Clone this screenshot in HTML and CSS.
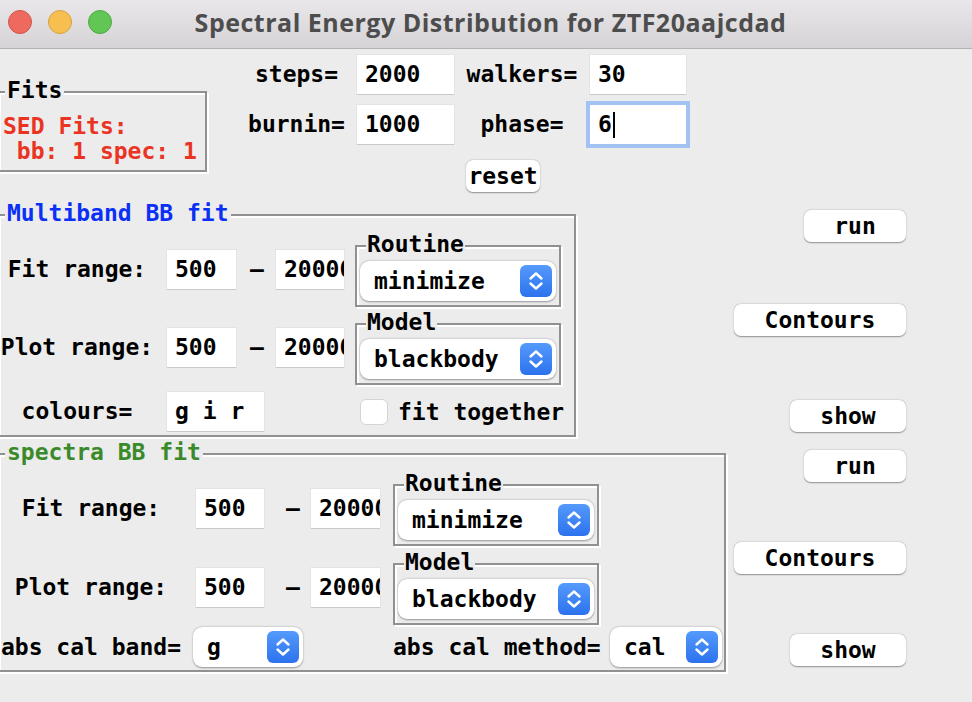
FILE: index.html
```html
<!DOCTYPE html>
<html>
<head>
<meta charset="utf-8">
<title>Spectral Energy Distribution for ZTF20aajcdad</title>
<link rel="stylesheet" href="styles.css">
</head>
<body>
<header class="titlebar">
  <div class="lights">
    <span class="light red"></span>
    <span class="light yellow"></span>
    <span class="light green"></span>
  </div>
  <div class="title">Spectral Energy Distribution for ZTF20aajcdad</div>
</header>

<main class="content">
  <section class="top">
    <div class="groove fits-frame">
      <span class="frame-label">Fits</span>
      <div class="fits-text">SED Fits:
 bb: 1 spec: 1</div>
    </div>
    <div class="params">
      <span class="plabel">steps=</span>
      <div class="entry">2000</div>
      <span class="plabel">walkers=</span>
      <div class="entry">30</div>
      <span class="plabel">burnin=</span>
      <div class="entry">1000</div>
      <span class="plabel">phase=</span>
      <div class="entry focused"><span class="caret">6</span></div>
      <button class="btn reset">reset</button>
    </div>
  </section>

  <section class="fit-row mb-row">
    <div class="groove fitframe mb">
      <span class="frame-label blue">Multiband BB fit</span>
      <div class="mb-grid">
        <span class="rlabel r1">Fit range:</span>
        <div class="entry e-lo r1">500</div>
        <span class="dash r1">–</span>
        <div class="entry e-hi r1">20000</div>
        <div class="groove subframe s1">
          <span class="frame-label sub">Routine</span>
          <div class="menubtn"><span>minimize</span><span class="arrow"><svg viewBox="0 0 32 32" width="32" height="32"><path d="M10.5 13.5 L16 8.5 L21.5 13.5 M10.5 18.5 L16 23.5 L21.5 18.5" fill="none" stroke="#fff" stroke-width="2.4" stroke-linecap="round" stroke-linejoin="round"/></svg></span></div>
        </div>

        <span class="rlabel r2">Plot range:</span>
        <div class="entry e-lo r2">500</div>
        <span class="dash r2">–</span>
        <div class="entry e-hi r2">20000</div>
        <div class="groove subframe s2">
          <span class="frame-label sub">Model</span>
          <div class="menubtn"><span>blackbody</span><span class="arrow"><svg viewBox="0 0 32 32" width="32" height="32"><path d="M10.5 13.5 L16 8.5 L21.5 13.5 M10.5 18.5 L16 23.5 L21.5 18.5" fill="none" stroke="#fff" stroke-width="2.4" stroke-linecap="round" stroke-linejoin="round"/></svg></span></div>
        </div>

        <span class="rlabel r3">colours=</span>
        <div class="entry e-col r3">g i r</div>
        <label class="check r3"><span class="box"></span><span>fit together</span></label>
      </div>
    </div>
    <div class="actions mb-actions">
      <button class="btn run">run</button>
      <button class="btn contours">Contours</button>
      <button class="btn show">show</button>
    </div>
  </section>

  <section class="fit-row sp-row">
    <div class="groove fitframe sp">
      <span class="frame-label green">spectra BB fit</span>
      <div class="sp-grid">
        <span class="rlabel r1">Fit range:</span>
        <div class="entry e-lo r1">500</div>
        <span class="dash r1">–</span>
        <div class="entry e-hi r1">20000</div>
        <div class="groove subframe s1">
          <span class="frame-label sub">Routine</span>
          <div class="menubtn"><span>minimize</span><span class="arrow"><svg viewBox="0 0 32 32" width="32" height="32"><path d="M10.5 13.5 L16 8.5 L21.5 13.5 M10.5 18.5 L16 23.5 L21.5 18.5" fill="none" stroke="#fff" stroke-width="2.4" stroke-linecap="round" stroke-linejoin="round"/></svg></span></div>
        </div>

        <span class="rlabel r2">Plot range:</span>
        <div class="entry e-lo r2">500</div>
        <span class="dash r2">–</span>
        <div class="entry e-hi r2">20000</div>
        <div class="groove subframe s2">
          <span class="frame-label sub">Model</span>
          <div class="menubtn"><span>blackbody</span><span class="arrow"><svg viewBox="0 0 32 32" width="32" height="32"><path d="M10.5 13.5 L16 8.5 L21.5 13.5 M10.5 18.5 L16 23.5 L21.5 18.5" fill="none" stroke="#fff" stroke-width="2.4" stroke-linecap="round" stroke-linejoin="round"/></svg></span></div>
        </div>

        <span class="rlabel r3">abs cal band=</span>
        <div class="menubtn band r3"><span>g</span><span class="arrow"><svg viewBox="0 0 32 32" width="32" height="32"><path d="M10.5 13.5 L16 8.5 L21.5 13.5 M10.5 18.5 L16 23.5 L21.5 18.5" fill="none" stroke="#fff" stroke-width="2.4" stroke-linecap="round" stroke-linejoin="round"/></svg></span></div>
        <span class="mlabel r3">abs cal method=</span>
        <div class="menubtn method r3"><span>cal</span><span class="arrow"><svg viewBox="0 0 32 32" width="32" height="32"><path d="M10.5 13.5 L16 8.5 L21.5 13.5 M10.5 18.5 L16 23.5 L21.5 18.5" fill="none" stroke="#fff" stroke-width="2.4" stroke-linecap="round" stroke-linejoin="round"/></svg></span></div>
      </div>
    </div>
    <div class="actions sp-actions">
      <button class="btn run">run</button>
      <button class="btn contours">Contours</button>
      <button class="btn show">show</button>
    </div>
  </section>
</main>
</body>
</html>
```

FILE: styles.css
```css
* { box-sizing: border-box; }

html, body {
  margin: 0;
  padding: 0;
}

body {
  width: 972px;
  height: 702px;
  overflow: hidden;
  background: #ececec;
  color: #000;
  font-family: "DejaVu Sans Mono", "Liberation Mono", monospace;
  font-weight: bold;
  font-size: 23px;
}

/* ---------- title bar ---------- */
.titlebar {
  height: 49px;
  display: grid;
  align-items: center;
  background: linear-gradient(#e9e7e9, #d5d3d5);
  border-bottom: 1px solid #b3b3b3;
}

.titlebar > * { grid-area: 1 / 1; }

.lights {
  justify-self: start;
  display: flex;
  gap: 16px;
  padding-left: 8px;
  margin-top: -4px;
}

.light {
  width: 24px;
  height: 24px;
  border-radius: 50%;
  border: 1px solid;
}
.light.red { background: #ee6a5f; border-color: #d2534a; }
.light.yellow { background: #f6bf50; border-color: #d8a23f; }
.light.green { background: #62c655; border-color: #4fa942; }

.title {
  justify-self: center;
  margin-top: -5px;
  margin-left: 9px;
  font-family: "Open Sans", "Liberation Sans", Arial, sans-serif;
  font-weight: bold;
  font-size: 25px;
  letter-spacing: 0.5px;
  color: #4d4d4d;
}

/* ---------- shared widgets ---------- */
.groove {
  position: relative;
  border: 2px solid #919191;
  box-shadow: inset 2px 2px 0 #fff, 2px 2px 0 #fff;
}

.frame-label {
  position: absolute;
  top: -15px;
  left: 6px;
  line-height: 24px;
  padding: 0 2px;
  background: #ececec;
  white-space: nowrap;
}
.frame-label.sub { left: 9px; padding: 0 1px; }
.frame-label.blue { color: #0a30f5; }
.frame-label.green { color: #3b8a2a; }

.entry {
  background: #fff;
  height: 39px;
  line-height: 39px;
  padding-left: 8px;
  overflow: hidden;
  white-space: nowrap;
  box-shadow: 0 1px 0 #c9c9c9, 0 0 0 1px #e4e4e4;
}

.entry.focused {
  box-shadow: 0 0 0 4px #a1c2f2;
}

.caret::after {
  content: "";
  display: inline-block;
  width: 2px;
  height: 26px;
  margin-left: 1px;
  background: #000;
  vertical-align: -6px;
}

.btn {
  font: inherit;
  color: #000;
  background: #fff;
  border: 0;
  border-radius: 7px;
  height: 32px;
  padding: 0;
  box-shadow: 0 0.5px 1.5px rgba(0, 0, 0, 0.4);
}

.menubtn {
  display: flex;
  align-items: center;
  justify-content: space-between;
  height: 40px;
  padding: 0 4px 0 14px;
  background: #fff;
  border-radius: 9px;
  box-shadow: 0 0.5px 2px rgba(0, 0, 0, 0.38);
  white-space: nowrap;
}

.arrow {
  display: flex;
  width: 32px;
  height: 32px;
  border-radius: 6px;
  background: linear-gradient(#559afb, #2c72ee);
}

.arrow svg { display: block; }

/* ---------- top area ---------- */
.top {
  display: flex;
  align-items: flex-start;
  height: 161px;
}

.fits-frame {
  flex: none;
  width: 210px;
  height: 81px;
  margin: 42px 0 0 -3px;
}

.fits-text {
  white-space: pre;
  color: #ea3323;
  line-height: 25px;
  padding: 21px 0 0 4px;
}

.params {
  display: grid;
  grid-template-columns: 113px 97px 128px 96px;
  grid-template-rows: 39px 39px 37px;
  column-gap: 4px;
  row-gap: 11px;
  margin: 6px 0 0 33px;
}

.plabel {
  text-align: center;
  line-height: 39px;
  white-space: nowrap;
}

.reset {
  grid-column: 3;
  grid-row: 3;
  justify-self: start;
  align-self: end;
  width: 74px;
  margin-left: 8px;
}

/* ---------- fit sections ---------- */
.fit-row {
  display: flex;
  align-items: flex-start;
}

.fitframe { flex: none; margin-left: -3px; }

.mb-row { margin-bottom: 13px; }
.mb { width: 579px; height: 223px; margin-top: 4px; }
.sp { width: 729px; height: 219px; margin-top: 3px; }

.actions {
  margin-left: auto;
  margin-right: 66px;
  display: flex;
  flex-direction: column;
  align-items: flex-end;
}

.run { width: 102px; }
.contours { width: 172px; }
.show { width: 116px; }

.mb-actions .contours { margin-top: 62px; }
.mb-actions .show { margin-top: 64px; }
.sp-actions .contours { margin-top: 60px; }
.sp-actions .show { margin-top: 60px; }

.mb-grid,
.sp-grid {
  display: grid;
  align-items: start;
}

.mb-grid {
  grid-template-columns: 156px 81px 40px 79px 206px;
  grid-template-rows: 101px 71px 47px;
}

.sp-grid {
  grid-template-columns: 184px 81px 47px 82px 206px 125px;
  grid-template-rows: 101px 69px 45px;
}

.rlabel {
  grid-column: 1;
  text-align: center;
  line-height: 39px;
  white-space: nowrap;
}

.dash {
  grid-column: 3;
  line-height: 39px;
}

.e-lo { grid-column: 2; }
.e-hi { grid-column: 4; }

.r1 { grid-row: 1; }
.r2 { grid-row: 2; }
.r3 { grid-row: 3; }

.subframe {
  grid-column: 5;
  width: 206px;
  height: 62px;
  padding: 14px 0 0 3px;
}
.subframe .menubtn { width: 196px; }
.s1 { grid-row: 1; }
.s2 { grid-row: 2; }

/* multiband specifics */
.mb-grid .r1 { margin-top: 34px; }
.mb-grid .s1 { margin-top: 29px; }
.mb-grid .r2 { margin-top: 11px; }
.mb-grid .s2 { margin-top: 6px; }
.mb-grid .r3 { margin-top: 4px; }
.mb-grid .e-lo { margin-left: 12px; width: 69px; }
.mb-grid .e-hi { width: 68px; }
.mb-grid .dash { padding-left: 14px; }

.e-col {
  grid-column: 2 / span 2;
  margin-left: 12px;
  width: 97px;
}

.check {
  grid-column: 5;
  display: flex;
  align-items: center;
  gap: 10px;
  height: 39px;
  padding-left: 5px;
  white-space: nowrap;
}

.check .box {
  flex: none;
  width: 28px;
  height: 26px;
  background: #fff;
  border: 1px solid #d4d4d4;
  border-radius: 6px;
}

/* spectra specifics */
.sp-grid .r1 { margin-top: 34px; }
.sp-grid .s1 { margin-top: 29px; }
.sp-grid .r2 { margin-top: 12px; }
.sp-grid .s2 { margin-top: 7px; }
.sp-grid .r3 { margin-top: 2px; }
.sp-grid .e-lo { margin-left: 13px; width: 68px; }
.sp-grid .e-hi { width: 69px; }
.sp-grid .dash { padding-left: 22px; }
.sp-grid .rlabel.r3 { line-height: 40px; }

.band {
  grid-column: 2 / span 3;
  margin-left: 10px;
  width: 110px;
}

.mlabel {
  grid-column: 5;
  line-height: 40px;
  white-space: nowrap;
}

.method {
  grid-column: 6;
  margin-left: 11px;
  width: 112px;
}
```
